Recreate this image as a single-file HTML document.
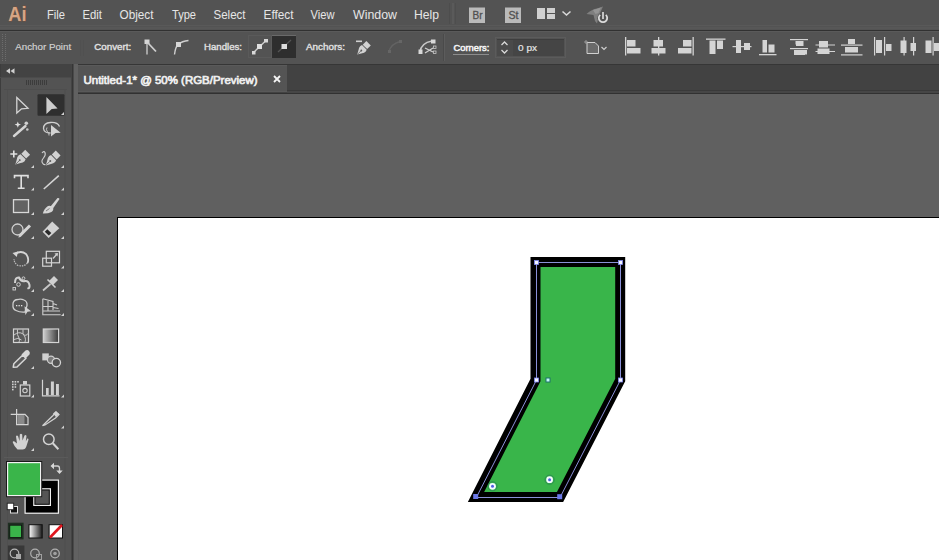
<!DOCTYPE html>
<html><head><meta charset="utf-8">
<style>
html,body{margin:0;padding:0;width:939px;height:560px;overflow:hidden;background:#535353;}
svg{display:block;position:absolute;left:0;top:0;}
text{font-family:"Liberation Sans",sans-serif;}
</style></head>
<body>
<svg width="939" height="560" viewBox="0 0 939 560">
<!-- ===== MENU BAR ===== -->
<rect x="0" y="0" width="939" height="30" fill="#535353"/>
<rect x="0" y="25" width="939" height="1" fill="#595959"/>
<rect x="0" y="27" width="939" height="2" fill="#575757"/>
<rect x="0" y="30" width="939" height="1" fill="#313131"/>
<text x="8.3" y="20.8" font-size="21" font-weight="bold" fill="#d6a585" stroke="#74513c" stroke-width="0.9" paint-order="stroke" textLength="18.2" lengthAdjust="spacingAndGlyphs">Ai</text>
<g font-size="13" fill="#e6e6e6">
<text x="47" y="19" textLength="18" lengthAdjust="spacingAndGlyphs">File</text>
<text x="82.5" y="19" textLength="19.5" lengthAdjust="spacingAndGlyphs">Edit</text>
<text x="119.5" y="19" textLength="34" lengthAdjust="spacingAndGlyphs">Object</text>
<text x="172" y="19" textLength="24" lengthAdjust="spacingAndGlyphs">Type</text>
<text x="213.5" y="19" textLength="32" lengthAdjust="spacingAndGlyphs">Select</text>
<text x="263.5" y="19" textLength="30" lengthAdjust="spacingAndGlyphs">Effect</text>
<text x="310.5" y="19" textLength="24" lengthAdjust="spacingAndGlyphs">View</text>
<text x="353" y="19" textLength="44" lengthAdjust="spacingAndGlyphs">Window</text>
<text x="414" y="19" textLength="25" lengthAdjust="spacingAndGlyphs">Help</text>
</g>
<rect x="449" y="3" width="1" height="21" fill="#4d4d4d"/>
<rect x="452" y="3" width="2" height="21" fill="#5a5a5a"/>
<rect x="455" y="3" width="1" height="21" fill="#4e4e4e"/>
<!-- Br / St -->
<rect x="469" y="7.5" width="16" height="15.5" fill="#bababa"/>
<text x="472.5" y="19" font-size="10.5" fill="#505050" stroke="#505050" stroke-width="0.3" textLength="10" lengthAdjust="spacingAndGlyphs">Br</text>
<rect x="505" y="7.5" width="16" height="15.5" fill="#bababa"/>
<text x="508.5" y="19" font-size="10.5" fill="#505050" stroke="#505050" stroke-width="0.3" textLength="10" lengthAdjust="spacingAndGlyphs">St</text>
<!-- workspace icon -->
<rect x="537" y="8" width="8" height="11" fill="#d0d0d0"/>
<rect x="547" y="8" width="8" height="5" fill="#d0d0d0"/>
<rect x="547" y="14" width="8" height="5" fill="#d0d0d0"/>
<path d="M562.5 11.5 L566.5 15 L570.5 11.5" stroke="#d8d8d8" stroke-width="1.6" fill="none"/>
<!-- sync icon -->
<path d="M586.5 14 Q592 9 597 8.5 L603 6.5 L601 11 L599 15 L597 23.5 L595 21 L593.5 15 Z" fill="#7f7f7f"/>
<path d="M593 10 L601 7.5 L598.5 13 L595.5 14 Z" fill="#959595"/>
<circle cx="603" cy="18.2" r="5.6" fill="#535353"/>
<path d="M600.2 14.8 A4.2 4.2 0 1 0 605.8 14.8" stroke="#dcdcdc" stroke-width="1.8" fill="none"/>
<rect x="601.6" y="11.5" width="2.8" height="8.5" fill="#535353"/>
<rect x="602.2" y="12" width="1.6" height="7" fill="#e0e0e0"/>

<!-- ===== CONTROL BAR ===== -->
<rect x="0" y="31" width="939" height="33" fill="#535353"/>
<rect x="0" y="31" width="939" height="1" fill="#5a5a5a"/>
<path d="M2.5 34 L2.5 61 M5.5 34 L5.5 61" stroke="#6c6c6c" stroke-width="1" stroke-dasharray="1 1"/>
<g font-size="9.6" fill="#e2e2e2" stroke="#e2e2e2" stroke-width="0.35">
<text x="15.2" y="49.8" textLength="56" lengthAdjust="spacingAndGlyphs" fill="#d4d4d4" stroke="#d4d4d4" stroke-width="0.15">Anchor Point</text>
<text x="94.2" y="50" textLength="37" lengthAdjust="spacingAndGlyphs">Convert:</text>
<text x="204" y="50" textLength="38" lengthAdjust="spacingAndGlyphs">Handles:</text>
<text x="306" y="50" textLength="39" lengthAdjust="spacingAndGlyphs">Anchors:</text>
<text x="453.4" y="51" textLength="36" lengthAdjust="spacingAndGlyphs" fill="#f6f6f6" stroke="#f6f6f6" stroke-width="0.5">Corners:</text>
</g>

<!-- ===== TAB BAR ===== -->
<rect x="74" y="64" width="865" height="30" fill="#424242"/>
<rect x="74" y="64" width="865" height="1" fill="#363636"/>
<rect x="287" y="90" width="652" height="1" fill="#393939"/>
<rect x="287" y="91" width="652" height="2" fill="#464646"/>
<rect x="78" y="65" width="209" height="27" fill="#545454"/>
<rect x="78" y="65" width="209" height="1" fill="#5a5a5a"/>
<rect x="78" y="91" width="209" height="1" fill="#595959"/>
<rect x="74" y="93" width="865" height="1" fill="#313131"/>
<text x="83.5" y="83.8" font-size="11.5" fill="#f0f0f0" stroke="#f0f0f0" stroke-width="0.7" textLength="174" lengthAdjust="spacingAndGlyphs">Untitled-1* @ 50% (RGB/Preview)</text>
<path d="M274 76 L280 82 M280 76 L274 82" stroke="#f4f4f4" stroke-width="1.8"/>

<!-- ===== PASTEBOARD ===== -->
<rect x="74" y="94" width="865" height="466" fill="#606060"/>
<rect x="117" y="217" width="822" height="343" fill="#000"/>
<rect x="118" y="218" width="821" height="342" fill="#fff"/>

<!-- ===== TOOLBAR ===== -->
<rect x="0" y="64" width="73" height="496" fill="#535353"/>
<rect x="0" y="64" width="73" height="14" fill="#434343"/>
<rect x="72" y="64" width="1" height="496" fill="#3a3a3a"/>
<path d="M10 68.3 L6 71 L10 73.7 Z M14.5 68.3 L10.5 71 L14.5 73.7 Z" fill="#d0d0d0"/>

<!-- ===== SHAPE ===== -->
<path d="M535.5 262 L620.2 262 L620.2 380 L560.1 496.9 L476 496.9 L535.5 380 Z" fill="#39b54a" stroke="#000" stroke-width="10" stroke-miterlimit="10"/>
<path d="M536.5 262.5 L620.5 262.5 L620.5 380 L560 497.5 L476.3 497.5 L536.5 380 Z" fill="none" stroke="#8a90d8" stroke-width="1"/>
<g>
<rect x="534.5" y="260.5" width="4" height="4" fill="#f4f6ff" stroke="#8088f0" stroke-width="0.8"/>
<rect x="618.5" y="260.5" width="4" height="4" fill="#f4f6ff" stroke="#8088f0" stroke-width="0.8"/>
<rect x="618.5" y="378" width="4" height="4" fill="#f4f6ff" stroke="#8088f0" stroke-width="0.8"/>
<rect x="534.5" y="378" width="4" height="4" fill="#f4f6ff" stroke="#8088f0" stroke-width="0.8"/>
<rect x="473.2" y="494" width="5" height="5" fill="#6b78e8"/>
<rect x="557.2" y="494.2" width="5" height="5" fill="#6b78e8"/>
<rect x="546" y="378" width="4" height="4" fill="#c8ffff" stroke="#1f6f6f" stroke-width="1" opacity="0.95"/>
<circle cx="549.6" cy="479.7" r="4.6" fill="none" stroke="#1d6a5a" stroke-width="1" opacity="0.5"/>
<circle cx="549.6" cy="479.7" r="3.4" fill="#f4fbff"/>
<circle cx="549.6" cy="479.7" r="1.5" fill="#4f5fe0"/>
<circle cx="492.5" cy="486.3" r="4.6" fill="none" stroke="#1d6a5a" stroke-width="1" opacity="0.5"/>
<circle cx="492.5" cy="486.3" r="3.4" fill="#f4fbff"/>
<circle cx="492.5" cy="486.3" r="1.5" fill="#4f5fe0"/>
</g>
<!-- control icons -->
<g id="ctl">
<!-- section dividers -->
<rect x="80" y="40" width="1" height="16" fill="#505050"/><rect x="83" y="40" width="1" height="16" fill="#505050"/>
<rect x="443" y="34" width="1" height="27" fill="#4a4a4a"/><rect x="444" y="34" width="1" height="27" fill="#5c5c5c"/>
<!-- convert to corner -->
<rect x="144.5" y="39.5" width="5" height="4.5" fill="#d6d6d6"/>
<path d="M147 43 L147 54.5" stroke="#d0d0d0" stroke-width="1.3"/>
<path d="M148 43 L156 51.5" stroke="#cfcfcf" stroke-width="1.8"/>
<!-- convert to smooth -->
<path d="M174.5 54.5 Q175.5 46 178.5 44.5 Q182 41 188.5 40.5" stroke="#cfcfcf" stroke-width="1.4" fill="none"/>
<rect x="176" y="42" width="5" height="5" fill="#d6d6d6"/>
<!-- handles buttons -->
<rect x="248.5" y="35.5" width="23" height="22" fill="none" stroke="#5a5a5a" stroke-width="1"/>
<path d="M253.5 52.5 L266 40.5" stroke="#cdcdcd" stroke-width="1.4"/>
<rect x="257" y="44" width="5" height="5" fill="#e0e0e0"/>
<rect x="264" y="39" width="4" height="3.5" fill="#d8d8d8"/>
<rect x="252" y="51" width="3.5" height="3.5" fill="#d8d8d8"/>
<rect x="272" y="35" width="24" height="23" fill="#2e2e2e"/>
<rect x="272" y="35" width="24" height="1" fill="#6a6a6a"/>
<path d="M278 52 L291 40" stroke="#555" stroke-width="1.3"/>
<rect x="281.5" y="44" width="5.5" height="5" fill="#dedede"/>
<!-- remove anchor pen -->
<rect x="356" y="40.5" width="6" height="1.6" fill="#d0d0d0"/>
<g transform="translate(357.2 54.6) rotate(45) scale(0.92)"><path d="M0 0 L-2.2 -4 Q-4.4 -7 -4.2 -9 L-3.6 -11 L3.6 -11 L4.2 -9 Q4.4 -7 2.2 -4 Z" fill="#d2d2d2"/><rect x="-3.4" y="-17.5" width="6.8" height="5.6" fill="#d2d2d2"/><path d="M0 -0.8 L0 -5.5" stroke="#5a5a5a" stroke-width="0.8"/><circle cx="0" cy="-6.3" r="1" fill="#5a5a5a"/></g>
<!-- disabled connect -->
<path d="M389 51.5 Q391 44 400 41.5" stroke="#636363" stroke-width="1.3" fill="none"/>
<rect x="388" y="50" width="3" height="3" fill="#666"/><rect x="399" y="40" width="3" height="3" fill="#666"/>
<!-- cut path -->
<path d="M420 52 Q421 43 432 41" stroke="#c8c8c8" stroke-width="1.4" fill="none"/>
<rect x="418.5" y="49.5" width="4" height="4.5" fill="#d8d8d8"/>
<rect x="431" y="39.5" width="4.5" height="4" fill="#d8d8d8"/>
<path d="M425 48 L433 52 M425 53 L433 48" stroke="#d0d0d0" stroke-width="1.3"/>
<rect x="433.5" y="46" width="2.5" height="2.5" fill="none" stroke="#c8c8c8" stroke-width="0.8"/>
<rect x="433.5" y="51" width="2.5" height="2.5" fill="none" stroke="#c8c8c8" stroke-width="0.8"/>
<!-- corners dotted underline -->
<path d="M453.5 54.5 L489.5 54.5" stroke="#c8c8c8" stroke-width="1" stroke-dasharray="1 1"/>
<!-- spinner + input -->
<rect x="495.5" y="37.5" width="70" height="20" fill="none" stroke="#5b5b5b" stroke-width="1"/>
<rect x="497" y="39" width="67" height="17" fill="#4a4a4a"/>
<rect x="513" y="39" width="51" height="17" fill="#454545"/>
<rect x="497" y="39" width="67" height="1" fill="#3e3e3e"/>
<path d="M501.5 45 L504.5 42 L507.5 45 M501.5 50 L504.5 53 L507.5 50" stroke="#d8d8d8" stroke-width="1.3" fill="none"/>
<text x="518" y="51" font-size="9.5" fill="#e4e4e4" stroke="#e4e4e4" stroke-width="0.2" textLength="19" lengthAdjust="spacingAndGlyphs">0 px</text>
<!-- shape icon -->
<path d="M587 42.5 L595 42.5 L598.5 46 L598.5 53.5 L587 53.5 Z" fill="#6a6a6a" stroke="#d0d0d0" stroke-width="1"/>
<path d="M586 40 L586 44 M584 42 L588 42" stroke="#aaa" stroke-width="0.8"/>
<path d="M601.5 47 L604 49.5 L606.5 47" stroke="#cfcfcf" stroke-width="1.2" fill="none"/>
<!-- align icons -->
<g fill="#d4d4d4">
<rect x="625" y="37" width="1.3" height="18.5"/>
<rect x="627" y="40" width="8.5" height="6.5"/><rect x="627" y="48" width="13.5" height="5.5"/>
<rect x="658" y="37" width="1.3" height="18.5"/>
<rect x="653.5" y="40" width="9.5" height="6.5"/><rect x="651.5" y="48" width="14" height="5.5"/>
<rect x="692.5" y="37" width="1.3" height="18.5"/>
<rect x="683" y="40" width="8.5" height="6.5"/><rect x="678" y="48" width="13.5" height="5.5"/>
<rect x="706" y="38.5" width="19.5" height="1.3"/>
<rect x="709.5" y="40.5" width="6" height="13.5"/><rect x="717" y="40.5" width="6" height="8.5"/>
<rect x="732.5" y="46" width="19" height="1.2"/>
<rect x="736" y="40" width="5" height="13"/><rect x="744" y="43" width="6" height="7"/>
<rect x="759" y="54" width="17.5" height="1.3"/>
<rect x="762.5" y="40" width="4.5" height="12.5"/><rect x="768.5" y="44.5" width="6" height="8"/>
<rect x="790" y="39" width="18" height="1.2"/><rect x="795.5" y="41" width="7.5" height="3.5"/>
<rect x="790" y="48" width="18" height="1.2"/><rect x="794" y="50" width="11" height="5"/>
<rect x="796" y="41" width="7.5" height="5"/><rect x="796" y="50" width="11" height="4.5"/>
<rect x="815.5" y="44.5" width="19.5" height="1"/><rect x="819" y="41" width="9" height="6.5"/>
<rect x="815.5" y="51" width="19.5" height="1"/><rect x="817.5" y="48.5" width="12" height="5.5"/>
<rect x="841" y="44.5" width="21.5" height="1.2"/><rect x="848" y="39" width="7" height="5"/>
<rect x="841" y="54.3" width="21.5" height="1.2"/><rect x="845" y="47" width="13" height="5.5"/>
<rect x="874" y="37" width="1.2" height="18.5"/><rect x="876" y="40" width="6" height="13"/>
<rect x="884" y="37" width="1.2" height="18.5"/><rect x="886" y="44" width="5.5" height="7"/>
<rect x="903.5" y="37" width="1.2" height="18.5"/><rect x="900.5" y="40.5" width="6" height="12.5"/>
<rect x="913" y="37" width="1.2" height="18.5"/><rect x="910.5" y="43" width="5.5" height="8"/>
<rect x="925.5" y="40.5" width="6" height="12.5"/><rect x="932.5" y="37" width="1.2" height="18.5"/><rect x="934" y="43" width="5" height="8"/>
</g>
</g>
<!-- toolbar details -->
<g id="tools">
<rect x="0" y="64" width="1" height="496" fill="#3d3d3d"/>
<rect x="71" y="64" width="1" height="496" fill="#444"/>
<rect x="72" y="64" width="1" height="496" fill="#363636"/>
<rect x="73" y="64" width="1" height="496" fill="#4a4a4a"/>
<rect x="74" y="64" width="4" height="496" fill="#616161"/><rect x="78" y="94" width="1" height="466" fill="#5c5c5c"/>
<rect x="0" y="77" width="71" height="1" fill="#4b4b4b"/>
<g fill="#3c3c3c"><rect x="26" y="80" width="1" height="5"/><rect x="28" y="80" width="1" height="5"/><rect x="30" y="80" width="1" height="5"/><rect x="32" y="80" width="1" height="5"/><rect x="34" y="80" width="1" height="5"/><rect x="36" y="80" width="1" height="5"/><rect x="38" y="80" width="1" height="5"/><rect x="40" y="80" width="1" height="5"/><rect x="42" y="80" width="1" height="5"/><rect x="44" y="80" width="1" height="5"/><rect x="46" y="80" width="1" height="5"/></g>
<rect x="4" y="89" width="63" height="1" fill="#4e4e4e"/>
<!-- separators -->
<rect x="7" y="90" width="1" height="470" fill="#4f4f4f"/>
<rect x="64.5" y="90" width="1" height="470" fill="#4f4f4f"/>
<rect x="4" y="457" width="64" height="1" fill="#5a5a5a"/>
<!-- selected direct selection bg -->
<rect x="37.5" y="94.2" width="27" height="21.5" fill="#2f2f2f" rx="1"/>
<g fill="#d2d2d2" stroke="none">
<!-- flyout triangles -->
<path d="M34 165 L34 168 L31 168 Z"/><path d="M64 165 L64 168 L61 168 Z"/>
<path d="M34 187.5 L34 190.5 L31 190.5 Z"/><path d="M64 187.5 L64 190.5 L61 190.5 Z"/>
<path d="M34 212 L34 215 L31 215 Z"/><path d="M64 212 L64 215 L61 215 Z"/>
<path d="M34 236 L34 239 L31 239 Z"/><path d="M64 236 L64 239 L61 239 Z"/>
<path d="M34 265.5 L34 268.5 L31 268.5 Z"/><path d="M64 265.5 L64 268.5 L61 268.5 Z"/>
<path d="M34 289 L34 292 L31 292 Z"/><path d="M64 289 L64 292 L61 292 Z"/>
<path d="M34 313 L34 316 L31 316 Z"/><path d="M64 313 L64 316 L61 316 Z"/>
<path d="M34 366 L34 369 L31 369 Z"/>
<path d="M34 394.5 L34 397.5 L31 397.5 Z"/><path d="M64 394.5 L64 397.5 L61 397.5 Z"/>
<path d="M64 425.5 L64 428.5 L61 428.5 Z"/>
<path d="M34 448 L34 451 L31 451 Z"/>
<path d="M64 112 L64 115 L61 115 Z"/>
</g>
<!-- row1 -->
<path d="M16.8 97.5 L28 108.3 L21.5 108.8 L16.8 113 Z" fill="none" stroke="#d4d4d4" stroke-width="1.3" stroke-linejoin="miter"/>
<path d="M46.4 96.9 L57.6 108.5 L51.7 109 L46.4 114 Z" fill="#cdcdcd"/>
<!-- magic wand -->
<path d="M14 136 L25.5 126" stroke="#d4d4d4" stroke-width="2.4" stroke-linecap="round"/>
<path d="M17.8 121.5 L18.7 123.7 L21 124.6 L18.7 125.5 L17.8 127.7 L16.9 125.5 L14.6 124.6 L16.9 123.7 Z" fill="#dedede"/>
<circle cx="26.3" cy="123.3" r="1.8" fill="#d0d0d0"/>
<circle cx="27.3" cy="129.5" r="1.3" fill="#c8c8c8"/>
<!-- lasso -->
<path d="M50.5 133 Q44 133 43.5 128.5 Q43.5 123 50.5 122.5 Q57.5 122 59.5 126.5" fill="none" stroke="#d0d0d0" stroke-width="1.3"/>
<path d="M47 127.5 Q45.5 130 47.5 131.5 Q49.5 132.5 49 135.5" fill="none" stroke="#c8c8c8" stroke-width="1"/>
<path d="M51 125 L60.7 132.8 L55.5 133 L51 136.5 Z" fill="#d2d2d2"/>
<!-- add anchor pen -->
<path d="M10.3 154 L17.3 154 M13.8 150.5 L13.8 157.5" stroke="#e0e0e0" stroke-width="1.6"/>
<g transform="translate(15.3 164.6) rotate(45)"><path d="M0 0 L-2.2 -4 Q-4.4 -7 -4.2 -9 L-3.6 -11 L3.6 -11 L4.2 -9 Q4.4 -7 2.2 -4 Z" fill="#d2d2d2"/><rect x="-3.4" y="-17.5" width="6.8" height="5.6" fill="#d2d2d2"/><path d="M0 -0.8 L0 -5.5" stroke="#606060" stroke-width="0.8"/><circle cx="0" cy="-6.3" r="1" fill="#606060"/></g>
<!-- curvature pen -->
<path d="M42 153 Q44 150.5 45 152.5 Q46 155 43.5 158 Q41 161 42.5 163 Q43.5 165 45.5 164.5" fill="none" stroke="#d0d0d0" stroke-width="1.1"/>
<g transform="translate(45.8 165.4) rotate(45)"><path d="M0 0 L-2.2 -4 Q-4.4 -7 -4.2 -9 L-3.6 -11 L3.6 -11 L4.2 -9 Q4.4 -7 2.2 -4 Z" fill="#d2d2d2"/><rect x="-3.4" y="-17.5" width="6.8" height="5.6" fill="#d2d2d2"/><path d="M0 -0.8 L0 -5.5" stroke="#606060" stroke-width="0.8"/><circle cx="0" cy="-6.3" r="1" fill="#606060"/></g>
<!-- type -->
<path d="M14.5 178.2 L14.5 175.6 L28 175.6 L28 178.2 M21.2 175.6 L21.2 188.2 M17.8 188.2 L24.6 188.2" fill="none" stroke="#e0e0e0" stroke-width="1.6"/>
<!-- line -->
<path d="M43.8 189 L58.8 175.6" stroke="#d4d4d4" stroke-width="1.6"/>
<!-- rectangle -->
<rect x="13.5" y="199.7" width="15" height="12.8" fill="#626262" stroke="#d8d8d8" stroke-width="1.3"/>
<!-- paintbrush -->
<path d="M50.5 206.5 L57.5 198 Q59 197.5 59.5 199 L53 208.5 Z" fill="#d4d4d4"/>
<path d="M42.8 213.6 Q44 208.5 48 206 Q51 205 53 207.5 Q54 210 51.5 212 Q48 213.8 42.8 213.6 Z" fill="#d4d4d4"/>
<path d="M46 211 L49.5 208.5" stroke="#666" stroke-width="0.8"/>
<!-- shaper -->
<circle cx="17.5" cy="229.5" r="5.5" fill="#5e5e5e" stroke="#d0d0d0" stroke-width="1.3"/>
<path d="M19.5 236 L30 225.5" stroke="#d4d4d4" stroke-width="3"/>
<path d="M18.5 237.8 L19 234.5 L21 236.5 Z" fill="#d0d0d0"/>
<!-- eraser -->
<path d="M42.5 231.7 L52.2 221.5 L59.3 228.2 L48.6 238 Z" fill="#d2d2d2"/>
<path d="M44.8 231.8 L47.3 229.2 L51.3 233 L48.8 235.6 Z" fill="#2a2a2a"/>
<!-- rotate -->
<path d="M15 254 Q21 250 26 254 Q29.5 258.5 27.5 263" fill="none" stroke="#d4d4d4" stroke-width="1.8"/>
<path d="M27.5 263 Q24 267 18 265.5 Q14 263 14 259" fill="none" stroke="#bdbdbd" stroke-width="1.2" stroke-dasharray="1.5 1"/>
<path d="M12.5 253 L18 251.5 L16.8 257 Z" fill="#d6d6d6"/>
<!-- scale -->
<rect x="46.3" y="251.3" width="13.2" height="11.5" fill="none" stroke="#d4d4d4" stroke-width="1.2"/>
<rect x="42.7" y="258.2" width="8.8" height="8" fill="none" stroke="#d4d4d4" stroke-width="1.2"/>
<path d="M53 258.5 L57 254" stroke="#d0d0d0" stroke-width="1.3"/>
<path d="M58 253 L57.5 256.5 L54.5 253.5 Z" fill="#d0d0d0"/>
<!-- width/warp tool -->
<path d="M15 283 Q15 277 19 277.5 Q21 282 25 281 Q28.5 280.5 29.5 285 Q30 289 27.5 288" fill="none" stroke="#d0d0d0" stroke-width="2"/>
<circle cx="18.5" cy="284.5" r="1.8" fill="none" stroke="#d0d0d0" stroke-width="1"/>
<circle cx="23.5" cy="278.3" r="1.4" fill="none" stroke="#d0d0d0" stroke-width="1"/>
<rect x="13" y="287.5" width="2.5" height="2.5" fill="none" stroke="#d0d0d0" stroke-width="0.9"/>
<!-- puppet warp pin -->
<path d="M49 281 L54 276 L58 280 L53 285 Z" fill="#d0d0d0"/>
<path d="M47.5 279.5 L55.5 287.5" stroke="#d0d0d0" stroke-width="1.6"/>
<path d="M50.5 284 L43 290.5" stroke="#c8c8c8" stroke-width="1.8"/>
<!-- shape builder -->
<path d="M13 305 Q12.5 300 17.5 299.5 Q21 298.5 24 300 Q27.5 301.5 27 305.5 L25 312 Q20 312.5 16 310.5 Q12.5 309 13 305 Z" fill="none" stroke="#cfcfcf" stroke-width="1.3"/>
<g fill="#e0e0e0"><rect x="16" y="305" width="1.3" height="1.3"/><rect x="18.5" y="305" width="1.3" height="1.3"/><rect x="21" y="305" width="1.3" height="1.3"/></g>
<path d="M24.5 306.3 L31.2 311.2 L27.5 311.8 L25.4 315 Z" fill="#d2d2d2"/>
<!-- perspective grid -->
<path d="M42.8 298.8 L42.8 314.8 L60.7 314.8 M42.8 298.8 L53 301.5 L53 310 M42.8 306.5 L53 306.5 M48 300 L48 310.5 M42.8 311 L60 311 M53 303.5 L57 305 M53 307.5 L58.5 308.5" fill="none" stroke="#cdcdcd" stroke-width="1.1"/>
<!-- mesh -->
<rect x="13.5" y="329" width="15" height="13.5" fill="#5a5a5a" stroke="#d4d4d4" stroke-width="1.2"/>
<path d="M14 335 Q19 331 23 334 Q26 337 28.5 333 M17.5 329.5 Q16.5 335 19 338 Q20 341 19 342 M23 329.5 Q22 334 25 337 Q26 340 25 342 M14 339.5 Q18 337 21.5 340" fill="none" stroke="#c8c8c8" stroke-width="1"/>
<!-- gradient -->
<defs><linearGradient id="gtool" x1="0" x2="1" y1="0" y2="0"><stop offset="0" stop-color="#cfcfcf"/><stop offset="1" stop-color="#3a3a3a"/></linearGradient>
<linearGradient id="gbtn" x1="0" x2="1" y1="0" y2="0"><stop offset="0" stop-color="#ffffff"/><stop offset="1" stop-color="#1a1a1a"/></linearGradient></defs>
<rect x="43.3" y="329" width="15.3" height="13.5" fill="url(#gtool)" stroke="#d4d4d4" stroke-width="1.2"/>
<!-- eyedropper -->
<path d="M13.2 367.3 L13.8 363.8 L22.8 355 L26 358.2 L17 367 Z" fill="#5a5a5a" stroke="#d6d6d6" stroke-width="1.5" stroke-linejoin="round"/>
<path d="M21.5 354.5 L25.5 350.5 Q27.5 349.5 29 351 Q30.5 352.5 29.5 354.5 L25.5 358.5 Z" fill="#d6d6d6"/>
<!-- blend -->
<rect x="42.3" y="353.4" width="6.5" height="7" fill="#d0d0d0"/>
<circle cx="51" cy="359.8" r="3.6" fill="#7a7a7a" stroke="#d0d0d0" stroke-width="1.2"/>
<circle cx="56.3" cy="362.6" r="4.2" fill="#535353" stroke="#d4d4d4" stroke-width="1.3"/>
<!-- symbol sprayer -->
<g fill="#d0d0d0"><rect x="12" y="381" width="1.6" height="1.6"/><rect x="14.6" y="381" width="1.6" height="1.6"/><rect x="17.2" y="381" width="1.6" height="1.6"/><rect x="12" y="383.6" width="1.6" height="1.6"/><rect x="14.6" y="383.6" width="1.6" height="1.6"/><rect x="12" y="386.2" width="1.6" height="1.6"/><rect x="14.6" y="386.2" width="1.6" height="1.6"/><rect x="12" y="388.8" width="1.6" height="1.6"/>
<rect x="23" y="381" width="4" height="3.5"/></g>
<rect x="20.3" y="385" width="9.5" height="11" fill="none" stroke="#d4d4d4" stroke-width="1.2"/>
<circle cx="25" cy="390.6" r="2.2" fill="none" stroke="#d0d0d0" stroke-width="1.1"/>
<!-- column graph -->
<path d="M42.5 379.7 L42.5 395.8 L59.5 395.8" fill="none" stroke="#d4d4d4" stroke-width="1.2"/>
<g fill="#d0d0d0"><rect x="46" y="388" width="2.7" height="7"/><rect x="50.9" y="381.5" width="3" height="13.5"/><rect x="56" y="384" width="2.9" height="11"/></g>
<!-- artboard -->
<path d="M16.6 409 L16.6 424.6 L28 424.6 L28 417.5 L25 414.3 L10.7 414.3" fill="none" stroke="#d4d4d4" stroke-width="1.2"/>
<rect x="17.5" y="415" width="7" height="9" fill="#8a8a8a"/>
<!-- slice -->
<path d="M42.5 425.7 L53 415.5 L56 412 L59 414.5 L55.5 418 L45 425 Z" fill="none" stroke="#d2d2d2" stroke-width="1.2"/>
<path d="M53 413.5 L56 411 L59 414 L56 417 Z" fill="#d2d2d2"/>
<!-- hand -->
<path d="M17.5 449.5 Q14 446 12.8 442.5 Q12.5 440.5 14.5 441.5 L17 443.5 L16 436.5 Q16.5 435 18 436 L19.5 441 L19.8 434.5 Q21 433.2 22.2 434.5 L22.5 440.5 L24.5 435.5 Q26 434.5 26.5 436 L25.8 441.5 L27.3 438.5 Q28.8 438 28.4 440 L26.5 446 Q25.5 449.5 22.5 449.5 Z" fill="#d2d2d2"/>
<!-- zoom -->
<circle cx="48.8" cy="439.2" r="5.3" fill="none" stroke="#d4d4d4" stroke-width="1.5"/>
<path d="M52.8 443.3 L58.4 449.3" stroke="#d4d4d4" stroke-width="2"/>
<!-- fill / stroke swatches -->
<rect x="24.5" y="479.5" width="34.5" height="34.3" fill="#f0f0f0"/>
<rect x="25.7" y="480.7" width="32.1" height="31.9" fill="#000"/>
<rect x="33.2" y="488.2" width="17.8" height="17.8" fill="#f0f0f0"/>
<rect x="34.4" y="489.4" width="15.4" height="15.4" fill="#000"/>
<rect x="35.4" y="490.4" width="13.4" height="13.4" fill="#555"/>
<rect x="6" y="461" width="36.2" height="36.2" fill="#1a1a1a"/>
<rect x="7" y="462" width="34.2" height="34.2" fill="#f2f2f2"/>
<rect x="8.2" y="463.2" width="31.8" height="31.8" fill="#3ab54a"/>
<!-- swap arrows -->
<path d="M53 466 L57.5 466 Q59.5 466 59.5 468.5 L59.5 471" fill="none" stroke="#d0d0d0" stroke-width="1.3"/>
<path d="M50.5 466 L54 462.8 L54 469.2 Z M56.3 470.5 L62.7 470.5 L59.5 474 Z" fill="#d8d8d8"/>
<!-- default fill stroke -->
<rect x="10.5" y="506.5" width="7" height="6.5" fill="#111" stroke="#e0e0e0" stroke-width="1"/>
<rect x="7.2" y="503.2" width="6.5" height="6.5" fill="#fff" stroke="#222" stroke-width="0.9"/>
<!-- color mode buttons -->
<rect x="7.9" y="522.7" width="15.7" height="16.7" fill="#1f2f22"/>
<rect x="9.8" y="525.2" width="11.8" height="12.2" fill="#3ab54a" stroke="#0f0f0f" stroke-width="0.8"/>
<rect x="29" y="524.7" width="13.2" height="13.3" fill="url(#gbtn)" stroke="#111" stroke-width="1"/>
<rect x="49.1" y="524.7" width="13.4" height="13.3" fill="#fff" stroke="#111" stroke-width="1"/>
<path d="M50 537.5 L62 525" stroke="#e0161e" stroke-width="2.6"/>
<!-- draw modes -->
<rect x="7.9" y="545.5" width="16.5" height="14.5" fill="#383838"/>
<circle cx="14.5" cy="553.5" r="4.3" fill="none" stroke="#b8b8b8" stroke-width="1.2"/>
<rect x="16" y="554" width="5" height="5" fill="#a8a8a8"/>
<circle cx="35" cy="553.5" r="4.3" fill="none" stroke="#b0b0b0" stroke-width="1.2"/>
<rect x="36.5" y="554.5" width="5" height="5" fill="none" stroke="#a0a0a0" stroke-width="1"/>
<circle cx="55" cy="553.5" r="4.3" fill="none" stroke="#b0b0b0" stroke-width="1.2"/>
<circle cx="55" cy="553.5" r="1.8" fill="#a0a0a0"/>
</g>
</svg>
</body></html>
